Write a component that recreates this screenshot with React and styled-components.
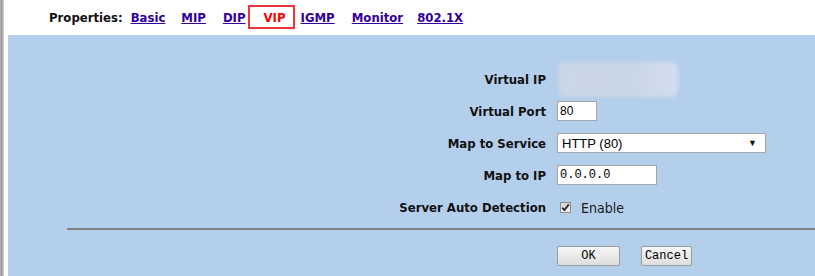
import React from 'react'
import styled, { createGlobalStyle } from 'styled-components'

const GlobalStyle = createGlobalStyle`
html, body {
  margin: 0;
  padding: 0;
  background: #ffffff;
  overflow: hidden;
}
`

// gap after each tab, read off the screenshot
const tabs = [
  { name: 'Basic', gap: 16 },
  { name: 'MIP', gap: 17 },
  { name: 'DIP', gap: 2 },
  { name: 'VIP', gap: 6, active: true },
  { name: 'IGMP', gap: 17 },
  { name: 'Monitor', gap: 14 },
  { name: '802.1X', gap: 0 },
]

function App() {
  return (
    <Page>
      <GlobalStyle />
      <Gutter />
      <Main>
        <TabBar>
          <TabLabel>Properties:</TabLabel>
          {tabs.map((t) =>
            t.active ? (
              <ActiveTab key={t.name} $gap={t.gap}>{t.name}</ActiveTab>
            ) : (
              <TabLink key={t.name} href="#" $gap={t.gap}>
                {t.name}
              </TabLink>
            )
          )}
        </TabBar>
        <Panel>
          <Form>
            <Label>Virtual IP</Label>
            <Cell>
              <Blurred />
            </Cell>
            <Label>Virtual Port</Label>
            <Cell>
              <TextBox $w={40} readOnly value="80" />
            </Cell>
            <Label>Map to Service</Label>
            <Cell>
              <Select>
                <span>HTTP (80)</span>
                <Arrow>▼</Arrow>
              </Select>
            </Cell>
            <Label>Map to IP</Label>
            <Cell>
              <TextBox $w={100} $mono readOnly value="0.0.0.0" />
            </Cell>
            <Label>Server Auto Detection</Label>
            <Cell>
              <Check>
                <svg width="9" height="9" viewBox="0 0 9 9">
                  <path d="M1.2 4.6 L3.4 7 L7.8 1.4" fill="none" stroke="#2b2b2b" strokeWidth="1.8" />
                </svg>
              </Check>
              <CheckText>Enable</CheckText>
            </Cell>
          </Form>
          <Divider />
          <Buttons>
            <Button $w={63}>OK</Button>
            <Button $w={51}>Cancel</Button>
          </Buttons>
        </Panel>
      </Main>
    </Page>
  )
}

export default App

const Page = styled.div`
display: flex;
width: 815px;
height: 276px;
font-family: 'DejaVu Sans Condensed', 'DejaVu Sans', Verdana, sans-serif;
font-stretch: condensed;
`

const Gutter = styled.div`
width: 4px;
flex: none;
background: linear-gradient(to right, #b8b8b8, #9a9a9a 40%, #d8d8d8);
`

const Main = styled.div`
flex: 1;
display: flex;
flex-direction: column;
padding-left: 4px;
`

const TabBar = styled.div`
height: 35px;
display: flex;
align-items: center;
padding-left: 41px;
font-size: 13px;
font-weight: bold;
box-sizing: border-box;
padding-bottom: 1px;
`

const TabLabel = styled.span`
color: #111;
margin-right: 8px;
`

const TabLink = styled.a`
color: #330099;
text-decoration: underline;
margin-right: ${(p) => p.$gap}px;
`

const ActiveTab = styled.span`
color: #ff0000;
border: 2px solid #e8343b;
height: 20px;
display: flex;
align-items: center;
padding: 0 7px 0 14px;
margin-right: ${(p) => p.$gap}px;
`

const Panel = styled.div`
flex: 1;
background: #b4cfec;
padding-top: 28px;
display: flex;
flex-direction: column;
`

const Form = styled.div`
display: grid;
grid-template-columns: 538px 1fr;
grid-auto-rows: 32px;
column-gap: 11px;
align-items: center;
`

const Label = styled.div`
text-align: right;
font-size: 13px;
font-weight: bold;
color: #111;
`

const Cell = styled.div`
display: flex;
align-items: center;
`

const Blurred = styled.div`
width: 120px;
height: 35px;
margin-left: 1px;
background: linear-gradient(to right, #cbd7e7, #c9d6e7 60%, #d3def0);
border-radius: 8px;
filter: blur(2px);
`

const TextBox = styled.input`
width: ${(p) => p.$w}px;
height: 20px;
box-sizing: border-box;
border: 1px solid #a7a7a7;
background: #fff;
padding: 0 2px;
margin: 0;
font-family: ${(p) => (p.$mono ? "'Liberation Mono', monospace" : "'Liberation Sans', Arial, sans-serif")};
font-size: 12px;
color: #000;
outline: none;
`

const Select = styled.div`
width: 209px;
height: 20px;
box-sizing: border-box;
border: 1px solid #a7a7a7;
background: #fff;
display: flex;
align-items: center;
justify-content: space-between;
padding: 0 8px 0 4px;
font-family: 'Liberation Sans', Arial, sans-serif;
font-stretch: normal;
font-size: 13px;
color: #000;
`

const Arrow = styled.span`
font-size: 9px;
color: #111;
`

const Check = styled.span`
width: 11px;
height: 11px;
box-sizing: border-box;
margin-left: 3px;
border: 1px solid #8e8e8e;
background: linear-gradient(#d6d6d6, #f4f4f4);
display: flex;
align-items: center;
justify-content: center;
`

const CheckText = styled.span`
margin-left: 10px;
margin-top: 1px;
font-size: 14px;
color: #1a1a1a;
`

const Divider = styled.div`
margin: 5px 0 0 59px;
height: 2px;
background: #808080;
`

const Buttons = styled.div`
display: flex;
gap: 21px;
padding: 16px 0 0 549px;
`

const Button = styled.button`
width: ${(p) => p.$w}px;
height: 20px;
box-sizing: border-box;
border: 1px solid #9c9c9c;
border-radius: 2px;
background: linear-gradient(#f6f6f6, #dedede);
font-family: 'Liberation Mono', monospace;
font-size: 12px;
color: #000;
padding: 0;
`
